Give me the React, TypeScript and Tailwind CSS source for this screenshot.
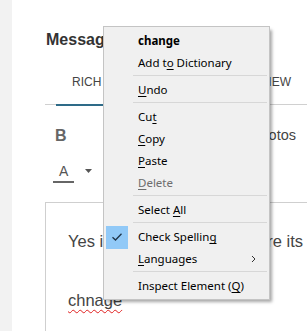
import React from "react";

function Item({
  children,
  bold,
  disabled,
  checked,
  arrow,
}: {
  children: React.ReactNode;
  bold?: boolean;
  disabled?: boolean;
  checked?: boolean;
  arrow?: boolean;
}) {
  return (
    <div
      className={`flex h-[22px] items-center ${bold ? "font-bold" : ""} ${
        disabled ? "text-[#6d6d6d]" : "text-[#000]"
      }`}
    >
      <div className="flex h-[22px] w-[22px] items-center justify-center">
        {checked && (
          <div className="flex h-[23px] w-[22px] items-center justify-center bg-[#91c9f7]">
            <svg width="12" height="10" viewBox="0 0 12 10">
              <path d="M1.5 5.2 L4.5 8 L10.5 1.8" fill="none" stroke="#1e3348" strokeWidth="1.3" />
            </svg>
          </div>
        )}
      </div>
      <div className="ml-[10px] flex-1 whitespace-nowrap">{children}</div>
      {arrow && (
        <svg className="mr-[11px]" width="5" height="8" viewBox="0 0 5 8">
          <path d="M1 1 L4 4 L1 7" fill="none" stroke="#333" strokeWidth="1" />
        </svg>
      )}
    </div>
  );
}

function Sep() {
  return <div className="ml-[27px] mt-[1px] mb-[3px] h-px bg-[#d7d7d7]" />;
}

export default function App() {
  return (
    <div className="relative flex h-[331px] w-[307px] overflow-hidden bg-[#f2f2f2] font-['Liberation_Sans',Arial,sans-serif]">
      <div className="w-[12px] shrink-0" />
      <div className="flex flex-1 flex-col bg-white pl-[33px] pt-[30px]">
        <div className="ml-[1px] h-[20px] text-[16px] font-bold leading-[20px] text-[#333]">
          Message
        </div>
        <div className="mt-[22px] flex h-[33px] border-b border-[#d0d0d0]">
          <div className="ml-[11px] h-[34px] border-b-2 border-[#2e6b88] px-[16px] text-[12px] leading-[20px] text-[#444]">
            RICH TEXT
          </div>
          <div className="ml-auto mr-[16px] text-[12px] leading-[20px] text-[#444]">PREVIEW</div>
        </div>
        <div className="mt-[19px] flex h-[24px] items-center justify-between pr-[11px]">
          <span className="ml-[10px] text-[16px] font-bold text-[#666]">B</span>
          <span className="text-[14.5px] text-[#444]">Photos</span>
        </div>
        <div className="mt-[12px] flex h-[24px] items-center">
          <span className="ml-[8px] border-b-2 border-[#666] px-[6px] text-[14px] leading-[20px] text-[#555]">
            A
          </span>
          <svg className="ml-[11px] -mt-[3px]" width="7" height="4" viewBox="0 0 7 4">
            <path d="M0 0 L7 0 L3.5 4 Z" fill="#555" />
          </svg>
        </div>
        <div className="mt-[18px] flex-1 border-l border-t border-[#cfcfcf] pl-[22px] pt-[26px] text-[16.5px] text-[#444]">
          <p className="whitespace-nowrap leading-[24px]">Yes it is good, just make sure its</p>
          <p className="mt-[35px] leading-[24px]">
            <span className="underline decoration-wavy decoration-[#e02020] decoration-1 underline-offset-[3px]">
              chnage
            </span>
          </p>
        </div>
      </div>

      <div className="absolute left-[103px] top-[26px] w-[167px] border border-[#c4c4c4] bg-[#f0f0f0] px-[2px] pb-[2px] pt-[3px] font-['Noto_Sans',sans-serif] text-[11.5px] shadow-[3px_3px_3px_-1px_rgba(0,0,0,0.35)]">
        <Item bold>change</Item>
        <Item>
          Add t<u className="underline-offset-[2px]">o</u> Dictionary
        </Item>
        <Sep />
        <Item>
          <u className="underline-offset-[2px]">U</u>ndo
        </Item>
        <Sep />
        <Item>
          Cu<u className="underline-offset-[2px]">t</u>
        </Item>
        <Item>
          <u className="underline-offset-[2px]">C</u>opy
        </Item>
        <Item>
          <u className="underline-offset-[2px]">P</u>aste
        </Item>
        <Item disabled>
          <u className="underline-offset-[2px]">D</u>elete
        </Item>
        <Sep />
        <Item>
          Select <u className="underline-offset-[2px]">A</u>ll
        </Item>
        <Sep />
        <Item checked>
          Check Spellin<u className="underline-offset-[2px]">g</u>
        </Item>
        <Item arrow>
          <u className="underline-offset-[2px]">L</u>anguages
        </Item>
        <Sep />
        <Item>
          Inspect Element (<u className="underline-offset-[2px]">Q</u>)
        </Item>
      </div>
    </div>
  );
}
